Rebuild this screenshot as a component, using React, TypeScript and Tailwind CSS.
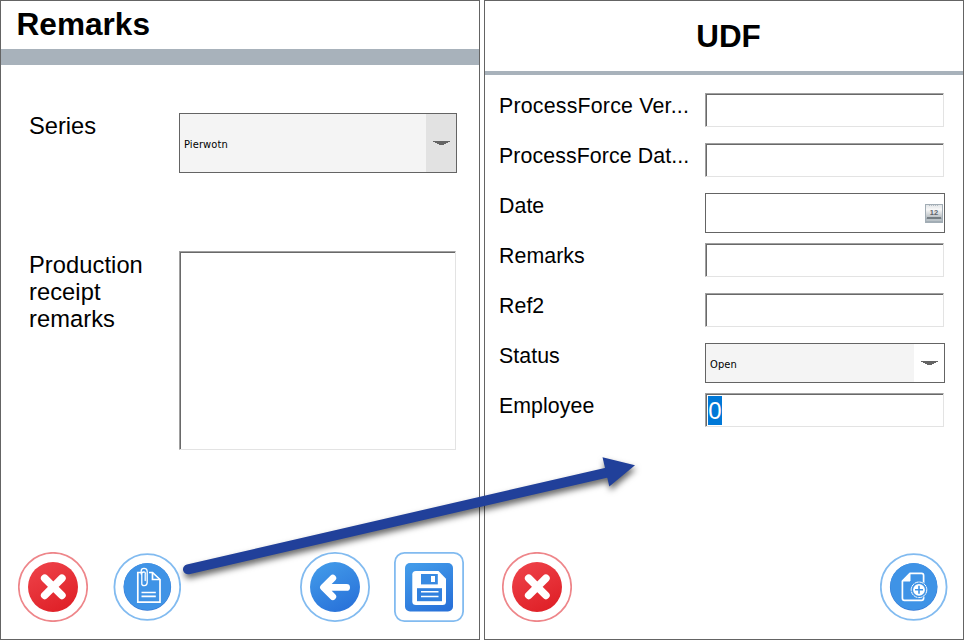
import React from "react";

const sans = "font-['Liberation_Sans',Arial,sans-serif]";
const small = "font-['DejaVu_Sans_Condensed','DejaVu_Sans',sans-serif]";

function CloseButton() {
  return (
    <button className="size-[70px]" aria-label="Close">
      <svg viewBox="0 0 70 70" className="block size-full">
        <defs>
          <linearGradient id="red" x1="0.2" y1="0" x2="0.7" y2="1">
            <stop offset="0" stopColor="#ee4249" />
            <stop offset="1" stopColor="#df2027" />
          </linearGradient>
        </defs>
        <circle cx="35" cy="35" r="34.2" fill="#fff" stroke="#ee868a" strokeWidth="1.7" />
        <circle cx="35" cy="35" r="25" fill="url(#red)" />
        <path d="M26.7 26.2l17.2 17.2M43.9 26.2L26.7 43.4" stroke="#fff" strokeWidth="7.6" strokeLinecap="round" />
      </svg>
    </button>
  );
}

function AttachmentButton() {
  return (
    <button className="h-[70px] w-[68px]" aria-label="Attachments">
      <svg viewBox="0 0 68 70" className="block size-full" fill="none">
        <circle cx="34.3" cy="35" r="32.9" fill="#fff" stroke="#82bbf0" strokeWidth="1.8" />
        <circle cx="34.3" cy="35" r="23.8" fill="#3277d4" />
        <circle cx="34.3" cy="34.6" r="23.5" fill="#3f93e6" />
        <g stroke="#fff" strokeWidth="1.7">
          <path d="M28 20.5H24.8V50.2H47V27.5L39.5 20.5H36" />
          <path d="M39.5 20.5V27.5H47" />
          <path d="M28.5 40.5H42.8M28.5 44.4H42.8" />
        </g>
        <path d="M28.2 22V19Q28.2 16.4 31 16.4T34.2 19V30.6Q34.2 33.6 31.3 33.6T28.8 31V21.8Q28.8 20 30.8 20T32.2 22V28.6" stroke="#fff" strokeWidth="1.3" strokeLinecap="round" />
      </svg>
    </button>
  );
}

function BackButton() {
  return (
    <button className="size-[70px]" aria-label="Back">
      <svg viewBox="0 0 70 70" className="block size-full">
        <defs>
          <linearGradient id="blue" x1="0.25" y1="0" x2="0.75" y2="1">
            <stop offset="0" stopColor="#429ae9" />
            <stop offset="1" stopColor="#2871d9" />
          </linearGradient>
        </defs>
        <circle cx="35" cy="35" r="34.1" fill="#fff" stroke="#82bbf0" strokeWidth="1.8" />
        <circle cx="35" cy="35" r="25" fill="url(#blue)" />
        <path d="M32.8 26.1L23.5 35.4L32.8 44.7M24.6 35.4H46.6" fill="none" stroke="#fff" strokeWidth="6.8" strokeLinecap="round" strokeLinejoin="round" />
      </svg>
    </button>
  );
}

function SaveButton() {
  return (
    <button className="size-[70px]" aria-label="Save">
      <svg viewBox="0 0 70 70" className="block size-full">
        <rect x="0.9" y="0.9" width="68.2" height="68.2" rx="9.5" fill="#fff" stroke="#82bbf0" strokeWidth="1.8" />
        <rect x="11" y="11" width="48" height="48.5" rx="5" fill="url(#blue)" />
        <path d="M22 19H44.5L52 26.7V49.5Q52 53 48.5 53H22Q18.3 53 18.3 49.5V22.5Q18.3 19 22 19Z" fill="#fff" />
        <rect x="27" y="22" width="16.8" height="10.4" fill="#388ae2" />
        <rect x="37" y="24" width="4" height="6" fill="#fff" />
        <rect x="23" y="36.2" width="25" height="13" fill="#3180de" />
        <path d="M27 39.7H44.5M27 44.6H44.5" stroke="#fff" strokeWidth="1.5" />
      </svg>
    </button>
  );
}

function AddDocumentButton() {
  return (
    <button className="h-[70px] w-[68px]" aria-label="Add document">
      <svg viewBox="0 0 68 70" className="block size-full" fill="none">
        <circle cx="33.7" cy="35" r="32.9" fill="#fff" stroke="#82bbf0" strokeWidth="1.8" />
        <circle cx="33.7" cy="35" r="23.8" fill="#3277d4" />
        <circle cx="33.7" cy="34.6" r="23.5" fill="#3f93e6" />
        <path d="M30 21.4H41.5Q43.6 21.4 43.6 23.5V46.2Q43.6 48.3 41.5 48.3H24.5Q22.4 48.3 22.4 46.2V29Z" stroke="#fff" strokeWidth="1.7" strokeLinejoin="round" />
        <path d="M22.5 29L30 21.4V29Z" fill="#fff" stroke="#fff" strokeLinejoin="round" />
        <circle cx="39" cy="37.8" r="8.8" fill="#3f93e6" />
        <circle cx="39" cy="37.8" r="7.8" stroke="#fff" strokeWidth="1" strokeDasharray="4 .6" />
        <circle cx="39" cy="37.8" r="5.9" fill="#fff" />
        <path d="M35 37.8H43M39 33.8V41.8" stroke="#3f93e6" strokeWidth="1.6" />
      </svg>
    </button>
  );
}

function Sunken({ className, children }: { className: string; children?: React.ReactNode }) {
  return (
    <div className={`border border-t-[#a0a0a0] border-l-[#a0a0a0] border-r-[#e3e3e3] border-b-[#e3e3e3] ${className}`}>
      <div className="h-full border-t border-l border-[#696969]">{children}</div>
    </div>
  );
}

function Select({ value, className, arrow }: { value: string; className: string; arrow: string }) {
  return (
    <div className={`flex border border-[#646464] bg-[#f4f4f4] ${className}`}>
      <span className={`flex flex-1 items-center pt-[3px] pl-1 text-[11px] leading-[14px] tracking-[0.12px] ${small}`}>{value}</span>
      <span className={`flex w-[30px] items-center justify-center ${arrow}`}>
        <svg width="17" height="4" viewBox="0 0 17 4" shapeRendering="crispEdges" fill="#646464">
          <path d="M0 0H17V1H15V2H13V3H11V4H6V3H4V2H2V1H0Z" />
        </svg>
      </span>
    </div>
  );
}

function CalendarIcon() {
  return (
    <svg width="18" height="19" viewBox="0 0 18 19">
      <defs>
        <linearGradient id="cal" x1="0" y1="0" x2="0" y2="1">
          <stop offset="0" stopColor="#e2e5e7" />
          <stop offset="0.35" stopColor="#f7f7f7" />
          <stop offset="1" stopColor="#b4bbc0" />
        </linearGradient>
      </defs>
      <rect width="18" height="19" fill="#a2adb5" />
      <rect x="1" y="1" width="16" height="13" fill="url(#cal)" />
      <path d="M4 1.5H14" stroke="#b5bdc3" strokeDasharray="1 1" />
      <rect x="2" y="13" width="14" height="2" fill="#747d83" />
      <rect x="1" y="15" width="16" height="2" rx="1" fill="#bac2c7" />
      <text x="9" y="10.5" textAnchor="middle" fontFamily="Liberation Sans, sans-serif" fontSize="7.5" fontWeight="bold" fill="#5d656b">12</text>
    </svg>
  );
}

function Field({ label, tracking = "tracking-[0.06px]", children }: { label: string; tracking?: string; children?: React.ReactNode }) {
  return (
    <div className="flex h-[50px] items-start">
      <span className={`w-[206px] pt-px text-[21.33px] leading-6 whitespace-nowrap ${tracking}`}>{label}</span>
      {children ?? <Sunken className="h-[34px] w-[239px]" />}
    </div>
  );
}

export default function App() {
  return (
    <div className={`relative flex h-[640px] w-[964px] gap-1 bg-white text-black ${sans}`}>
      <section className="flex w-[480px] flex-col border border-[#646464]">
        <h1 className="h-12 pl-[15.5px] pt-[5px] text-[31.6px] leading-9 font-bold">Remarks</h1>
        <div className="h-4 bg-[#a8b2bb]" />
        <div className="flex flex-1 flex-col pt-12 pl-7">
          <div className="flex h-[138px] items-start">
            <span className="w-[150px] text-[23.7px] leading-[27px]">Series</span>
            <Select value="Pierwotn" className="h-[60px] w-[278px]" arrow="bg-[#e2e2e2]" />
          </div>
          <div className="flex items-start">
            <span className="w-[150px] pt-px text-[23.7px] leading-[27px] tracking-[0.06px]">
              Production
              <br />
              receipt
              <br />
              remarks
            </span>
            <Sunken className="h-[199px] w-[277px]" />
          </div>
        </div>
        <footer className="flex items-start pr-[15px] pb-[17px] pl-[17px]">
          <CloseButton />
          <div className="ml-[25px] flex">
            <AttachmentButton />
          </div>
          <div className="ml-auto flex gap-6">
            <BackButton />
            <SaveButton />
          </div>
        </footer>
      </section>

      <section className="flex w-[480px] flex-col border border-[#646464]">
        <h1 className="h-[70px] pt-[18px] pl-[9px] text-center text-[31.4px] leading-9 font-bold">UDF</h1>
        <div className="h-1 bg-[#a8b2bb]" />
        <div className="flex-1 pt-[18px] pl-[14px]">
          <Field label="ProcessForce Ver..." tracking="tracking-[0.21px]" />
          <Field label="ProcessForce Dat..." tracking="tracking-[0.1px]" />
          <Field label="Date">
            <div className="flex h-10 w-60 items-center justify-end border border-[#646464] pr-px">
              <CalendarIcon />
            </div>
          </Field>
          <Field label="Remarks" />
          <Field label="Ref2" />
          <Field label="Status">
            <Select value="Open" className="h-10 w-60" arrow="bg-white" />
          </Field>
          <Field label="Employee">
            <Sunken className="h-[34px] w-[239px]">
              <span className="mt-px ml-px flex h-[29px] w-[14px] items-center justify-center bg-[#0078d7] text-[24px] leading-[29px] text-white">0</span>
            </Sunken>
          </Field>
        </div>
        <footer className="flex justify-between pr-[15px] pb-[17px] pl-[17px]">
          <CloseButton />
          <AddDocumentButton />
        </footer>
      </section>

      <svg className="pointer-events-none absolute top-0 left-0 h-[640px] w-[964px]" viewBox="0 0 964 640">
        <g className="drop-shadow-[1px_4px_3px_rgba(0,0,0,0.6)]">
          <path d="M188 569.3L608 472.3" stroke="#21409a" strokeWidth="10" strokeLinecap="round" />
          <path d="M602.5 457.3L635 465.2L609.3 486.5Z" fill="#21409a" />
        </g>
      </svg>
    </div>
  );
}
